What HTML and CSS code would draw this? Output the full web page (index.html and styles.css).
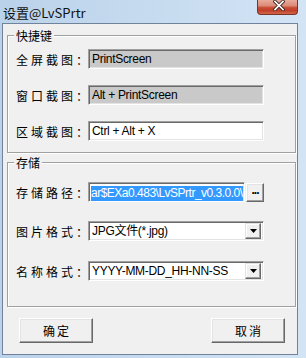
FILE: index.html
```html
<!DOCTYPE html>
<html lang="zh-CN">
<head>
  <meta charset="UTF-8" />
  <title>设置@LvSPrtr</title>
  <link rel="stylesheet" href="styles.css">
</head>
<body>
  <div class="window">
    <div class="titlebar">
      <span class="title">设置@LvSPrtr</span>
      <button class="close-btn" title="关闭">
        <svg width="12" height="11" viewBox="0 0 12 11">
          <path d="M2 1.5 L10 9.5 M10 1.5 L2 9.5" stroke="#3c2622" stroke-width="3.4" stroke-linecap="square" fill="none"/>
          <path d="M2 1.5 L10 9.5 M10 1.5 L2 9.5" stroke="#fff" stroke-width="1.7" stroke-linecap="square" fill="none"/>
        </svg>
      </button>
    </div>
    <div class="client">
      <fieldset class="group group-keys">
        <legend>快捷键</legend>
        <div class="row">
          <span class="label">全屏截图：</span>
          <div class="field readonly">PrintScreen</div>
        </div>
        <div class="row">
          <span class="label">窗口截图：</span>
          <div class="field readonly">Alt + PrintScreen</div>
        </div>
        <div class="row">
          <span class="label">区域截图：</span>
          <div class="field">Ctrl + Alt + X</div>
        </div>
      </fieldset>
      <fieldset class="group group-store">
        <legend>存储</legend>
        <div class="row">
          <span class="label">存储路径：</span>
          <div class="field path"><span class="selected">ar$EXa0.483\LvSPrtr_v0.3.0.0\</span></div>
          <button class="browse">...</button>
        </div>
        <div class="row row-combo">
          <span class="label">图片格式：</span>
          <div class="field combo">
            <span class="combo-text">JPG文件(*.jpg)</span>
            <span class="drop">
              <svg width="7" height="4" viewBox="0 0 7 4"><polygon points="0,0 7,0 3.5,4" fill="#000"/></svg>
            </span>
          </div>
        </div>
        <div class="row row-last">
          <span class="label">名称格式：</span>
          <div class="field combo">
            <span class="combo-text">YYYY-MM-DD_HH-NN-SS</span>
            <span class="drop">
              <svg width="7" height="4" viewBox="0 0 7 4"><polygon points="0,0 7,0 3.5,4" fill="#000"/></svg>
            </span>
          </div>
        </div>
      </fieldset>
      <div class="actions">
        <button class="btn">确定</button>
        <button class="btn">取消</button>
      </div>
    </div>
  </div>
</body>
</html>
```

FILE: styles.css
```css
* { box-sizing: border-box; }
body {
  margin: 0;
  font-family: "Noto Sans CJK SC", sans-serif;
  color: #000;
}
.window {
  width: 306px; height: 358px;
  background: linear-gradient(to right, #bad2ea, #d3e4f5);
  overflow: hidden;
}
.titlebar {
  height: 23px;
  display: flex;
  justify-content: space-between;
  align-items: flex-start;
  padding: 0 8px 0 3px;
}
.title {
  font-size: 13px;
  line-height: 15px;
  margin-top: 5px;
  color: #111;
}
.close-btn {
  width: 41px; height: 15px;
  padding: 0 0 3px 3px;
  border: 1px solid #7a3528;
  border-top: none;
  border-radius: 0 0 4px 4px;
  background: linear-gradient(#e9ab9c 0%, #dc8b78 40%, #c84c34 55%, #c0402a 75%, #d2654a 100%);
  display: flex; align-items: center; justify-content: center;
}
.client {
  margin-left: 2px;
  width: 296px; height: 332px;
  border: 1px solid #71839a;
  background: #f0f0f0;
  padding: 4px 0 0 4px;
}

/* group boxes */
.group {
  margin: 0;
  width: 289px;
  min-width: 0;
  border: 1px solid #a0a0a0;
  box-shadow: 1px 1px 0 #fff, inset 1px 1px 0 #fff;
  padding: 6px 0 11px 8px;
}
.group legend {
  font-size: 12px;
  line-height: 15px;
  padding: 0 2px;
  margin-left: -2px;
  background: #f0f0f0;
}
.group-store {
  margin-top: 2px;
  padding: 12px 0 25px 8px;
}
.row {
  display: flex;
  align-items: center;
  height: 20px;
}
.row + .row { margin-top: 16px; }
.group-store .row-combo { margin-top: 19px; }
.group-store .row-last { margin-top: 20px; }
.label {
  width: 72px;
  font-size: 12px;
  line-height: 15px;
  letter-spacing: 3px;
  white-space: nowrap;
}

/* sunken edit fields */
.field {
  width: 176px; height: 20px;
  border: 1px solid;
  border-color: #a0a0a0 #fff #fff #a0a0a0;
  box-shadow: inset 1px 1px 0 #696969, inset -1px -1px 0 #e3e3e3;
  background: #fff;
  padding: 0 2px 0 3px;
  font-family: "Liberation Sans", "Noto Sans CJK SC", sans-serif;
  font-size: 12px;
  letter-spacing: -0.3px;
  line-height: 18px;
  white-space: nowrap;
  overflow: hidden;
}
.field.readonly { background: #c9c9c9; }
.field.path {
  width: 157px;
  padding: 1px 1px 0 2px;
  letter-spacing: -0.5px;
}
.selected {
  display: inline-block;
  background: #3399ff;
  color: #fff;
  line-height: 15px;
}
.browse {
  width: 18px; height: 19px;
  margin-left: 1px;
  padding: 0 0 4px;
  border: 1px solid;
  border-color: #fff #696969 #696969 #fff;
  box-shadow: inset -1px -1px 0 #a0a0a0, inset 1px 1px 0 #e3e3e3;
  background: #f0f0f0;
  color: #000;
  font-family: "Liberation Sans", sans-serif;
  font-size: 12px;
  font-weight: bold;
  letter-spacing: -1px;
  line-height: 12px;
}
.combo {
  display: flex;
  align-items: center;
  justify-content: space-between;
  padding: 2px 2px 2px 3px;
}
.combo-text { line-height: 16px; }
.drop {
  width: 16px; height: 16px;
  flex-shrink: 0;
  border: 1px solid;
  border-color: #e3e3e3 #696969 #696969 #e3e3e3;
  box-shadow: inset -1px -1px 0 #a0a0a0, inset 1px 1px 0 #fff;
  background: #f0f0f0;
  display: flex; align-items: center; justify-content: center;
}

/* bottom buttons */
.actions {
  width: 289px;
  margin-top: 11px;
  padding: 0 11px 0 12px;
  display: flex;
  justify-content: space-between;
}
.btn {
  width: 74px; height: 25px;
  border: 1px solid;
  border-color: #fff #696969 #696969 #fff;
  box-shadow: inset -1px -1px 0 #a0a0a0, inset 1px 1px 0 #e3e3e3;
  background: #f0f0f0;
  font-family: "Noto Sans CJK SC", sans-serif;
  font-size: 12px;
  letter-spacing: 2px;
  padding: 0 0 0 2px;
  color: #000;
}
```
